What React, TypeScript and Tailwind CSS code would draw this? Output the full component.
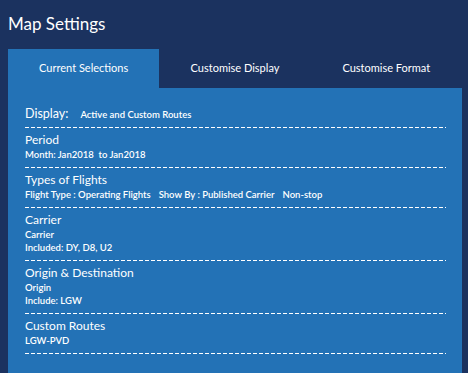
import React from "react";

const Dash = () => (
  <div className="h-px w-full bg-[repeating-linear-gradient(90deg,#ffffff_0px,#ffffff_4px,transparent_4px,transparent_6px)]" />
);

const Section = ({ title, lines }: { title: string; lines: React.ReactNode[] }) => (
  <div>
    <div className="pt-[4px] pb-[6px]">
      <div className="text-[12px] leading-[16px] text-white">{title}</div>
      {lines.map((l, i) => (
        <div key={i} className="text-[9.5px] leading-[13px] font-semibold text-white whitespace-pre">
          {l}
        </div>
      ))}
    </div>
    <Dash />
  </div>
);

export default function App() {
  return (
    <div
      className="w-[468px] h-[373px] overflow-hidden bg-[#1b325f] pl-[8px] pr-[6px] pt-[12px] flex flex-col"
      style={{ fontFamily: "Lato, 'Noto Sans', sans-serif" }}
    >
      <div className="text-[17px] leading-[24px] text-white mb-[13px]">Map Settings</div>
      <div className="flex h-[39px]">
        <div className="flex-1 bg-[#2372b6] flex items-center justify-center text-[11px] text-white">
          Current Selections
        </div>
        <div className="flex-1 flex items-center justify-center text-[11px] text-white">
          Customise Display
        </div>
        <div className="flex-1 flex items-center justify-center text-[11px] text-white">
          Customise Format
        </div>
      </div>
      <div className="flex-1 bg-[#2372b6] pl-[17px] pr-[16px] pt-[18px]">
        <div className="pb-[5px] flex items-baseline h-[21px]">
          <span className="text-[12.5px] leading-[16px] text-white">Display:</span>
          <span className="ml-[12px] text-[9.5px] font-semibold text-white">Active and Custom Routes</span>
        </div>
        <Dash />
        <Section title="Period" lines={["Month: Jan2018  to Jan2018"]} />
        <Section
          title="Types of Flights"
          lines={[
            <span className="flex gap-[8px]">
              <span>Flight Type : Operating Flights</span>
              <span>Show By : Published Carrier</span>
              <span>Non-stop</span>
            </span>,
          ]}
        />
        <Section title="Carrier" lines={["Carrier", "Included: DY, D8, U2"]} />
        <Section title="Origin & Destination" lines={["Origin", "Include: LGW"]} />
        <Section title="Custom Routes" lines={["LGW-PVD"]} />
      </div>
    </div>
  );
}
